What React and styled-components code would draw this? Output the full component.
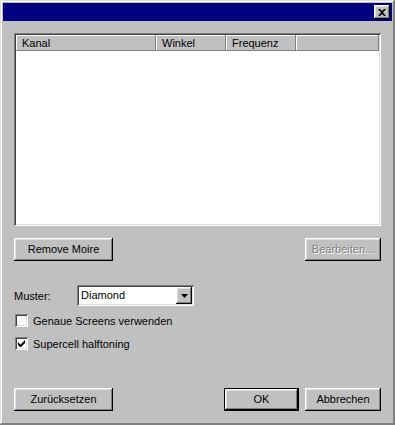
import React from "react";
import styled, { createGlobalStyle } from "styled-components";

const Global = createGlobalStyle`
  html, body { margin: 0; padding: 0; background: #c0c0c0; }
  body { font-family: "Liberation Sans", Arial, sans-serif; font-size: 11px; color: #000; }
  * { box-sizing: border-box; }
`;

const raised = `
  box-shadow: inset -1px -1px #000, inset 1px 1px #fff, inset -2px -2px #808080, inset 2px 2px #dfdfdf;
`;
const sunken = `
  box-shadow: inset 1px 1px #808080, inset -1px -1px #fff, inset 2px 2px #404040, inset -2px -2px #dfdfdf;
`;

const Window = styled.div`
  width: 395px;
  height: 425px;
  background: #c0c0c0;
  padding: 3px;
  display: flex;
  flex-direction: column;
  box-shadow: inset -1px -1px #808080, inset 1px 1px #dfdfdf, inset -2px -2px #808080, inset 2px 2px #fff;
`;

const TitleBar = styled.div`
  height: 18px;
  background: #000080;
  display: flex;
  align-items: center;
  justify-content: flex-end;
  padding-right: 2px;
`;

const CloseBtn = styled.div`
  width: 16px;
  height: 14px;
  background: #c0c0c0;
  ${raised}
  display: flex;
  align-items: center;
  justify-content: center;
`;

const Body = styled.div`
  flex: 1;
  display: flex;
  flex-direction: column;
  padding: 12px 11px 11px 11px;
`;

const ListView = styled.div`
  height: 193px;
  background: #fff;
  padding: 2px;
  ${sunken}
  display: flex;
  flex-direction: column;
`;

const Header = styled.div`
  display: flex;
  height: 16px;
  background: #c0c0c0;
`;

const HeadCell = styled.div`
  width: ${(p) => (p.$w ? p.$w + "px" : "auto")};
  flex: ${(p) => (p.$w ? "none" : "1")};
  height: 16px;
  padding: 1px 0 0 6px;
  line-height: 14px;
  box-shadow: inset -1px -1px #808080, inset 1px 1px #fff;
  background: #c0c0c0;
`;

const Row = styled.div`
  display: flex;
  align-items: center;
  justify-content: ${(p) => p.$justify || "flex-start"};
  gap: ${(p) => p.$gap || 0}px;
  margin-top: ${(p) => p.$mt || 0}px;
`;

const Button = styled.div`
  width: ${(p) => p.$w || 99}px;
  height: 23px;
  background: #c0c0c0;
  display: flex;
  align-items: center;
  justify-content: center;
  padding-bottom: 1px;
  color: ${(p) => (p.$disabled ? "#808080" : "#000")};
  text-shadow: ${(p) => (p.$disabled ? "1px 1px #fff" : "none")};
  box-shadow: ${(p) =>
    p.$default
      ? "inset 0 0 0 1px #000, inset -2px -2px #000, inset 2px 2px #fff, inset -3px -3px #808080, inset 3px 3px #dfdfdf"
      : "inset -1px -1px #000, inset 1px 1px #fff, inset -2px -2px #808080, inset 2px 2px #dfdfdf"};
`;

const Label = styled.span`
  width: 63px;
`;

const Combo = styled.div`
  width: 117px;
  height: 21px;
  background: #fff;
  padding: 2px;
  ${sunken}
  display: flex;
  align-items: stretch;
`;

const ComboText = styled.div`
  flex: 1;
  padding-left: 2px;
  line-height: 17px;
`;

const ComboArrow = styled.div`
  width: 16px;
  background: #c0c0c0;
  ${raised}
  display: flex;
  align-items: center;
  justify-content: center;
`;

const CheckRow = styled.label`
  display: flex;
  align-items: center;
  gap: 5px;
  margin-top: ${(p) => p.$mt}px;
  padding-left: 1px;
`;

const Box = styled.div`
  width: 13px;
  height: 13px;
  background: #fff;
  ${sunken}
  display: flex;
  align-items: center;
  justify-content: center;
`;

const Spacer = styled.div`
  flex: 1;
`;

export default function App() {
  return (
    <>
      <Global />
      <Window>
        <TitleBar>
          <CloseBtn>
            <svg width="8" height="7" viewBox="0 0 8 7">
              <path d="M0 0h2l2 2 2-2h2L5 3.5 8 7H6L4 5 2 7H0l3-3.5z" fill="#000" />
            </svg>
          </CloseBtn>
        </TitleBar>
        <Body>
          <ListView>
            <Header>
              <HeadCell $w={140}>Kanal</HeadCell>
              <HeadCell $w={70}>Winkel</HeadCell>
              <HeadCell $w={70}>Frequenz</HeadCell>
              <HeadCell />
            </Header>
          </ListView>
          <Row $justify="space-between" $mt={12}>
            <Button>Remove Moire</Button>
            <Button $w={76} $disabled>Bearbeiten...</Button>
          </Row>
          <Row $mt={24}>
            <Label>Muster:</Label>
            <Combo>
              <ComboText>Diamond</ComboText>
              <ComboArrow>
                <svg width="7" height="4" viewBox="0 0 7 4">
                  <path d="M0 0h7L3.5 4z" fill="#000" />
                </svg>
              </ComboArrow>
            </Combo>
          </Row>
          <CheckRow $mt={8}>
            <Box />
            <span>Genaue Screens verwenden</span>
          </CheckRow>
          <CheckRow $mt={10}>
            <Box>
              <svg width="7" height="7" viewBox="0 0 7 7">
                <path d="M0 2v3l2 2h1l4-4V0L2.5 4.5z" fill="#000" />
              </svg>
            </Box>
            <span>Supercell halftoning</span>
          </CheckRow>
          <Spacer />
          <Row $justify="space-between">
            <Button>Zurücksetzen</Button>
            <Row $gap={6}>
              <Button $w={75} $default>OK</Button>
              <Button $w={76}>Abbrechen</Button>
            </Row>
          </Row>
        </Body>
      </Window>
    </>
  );
}
